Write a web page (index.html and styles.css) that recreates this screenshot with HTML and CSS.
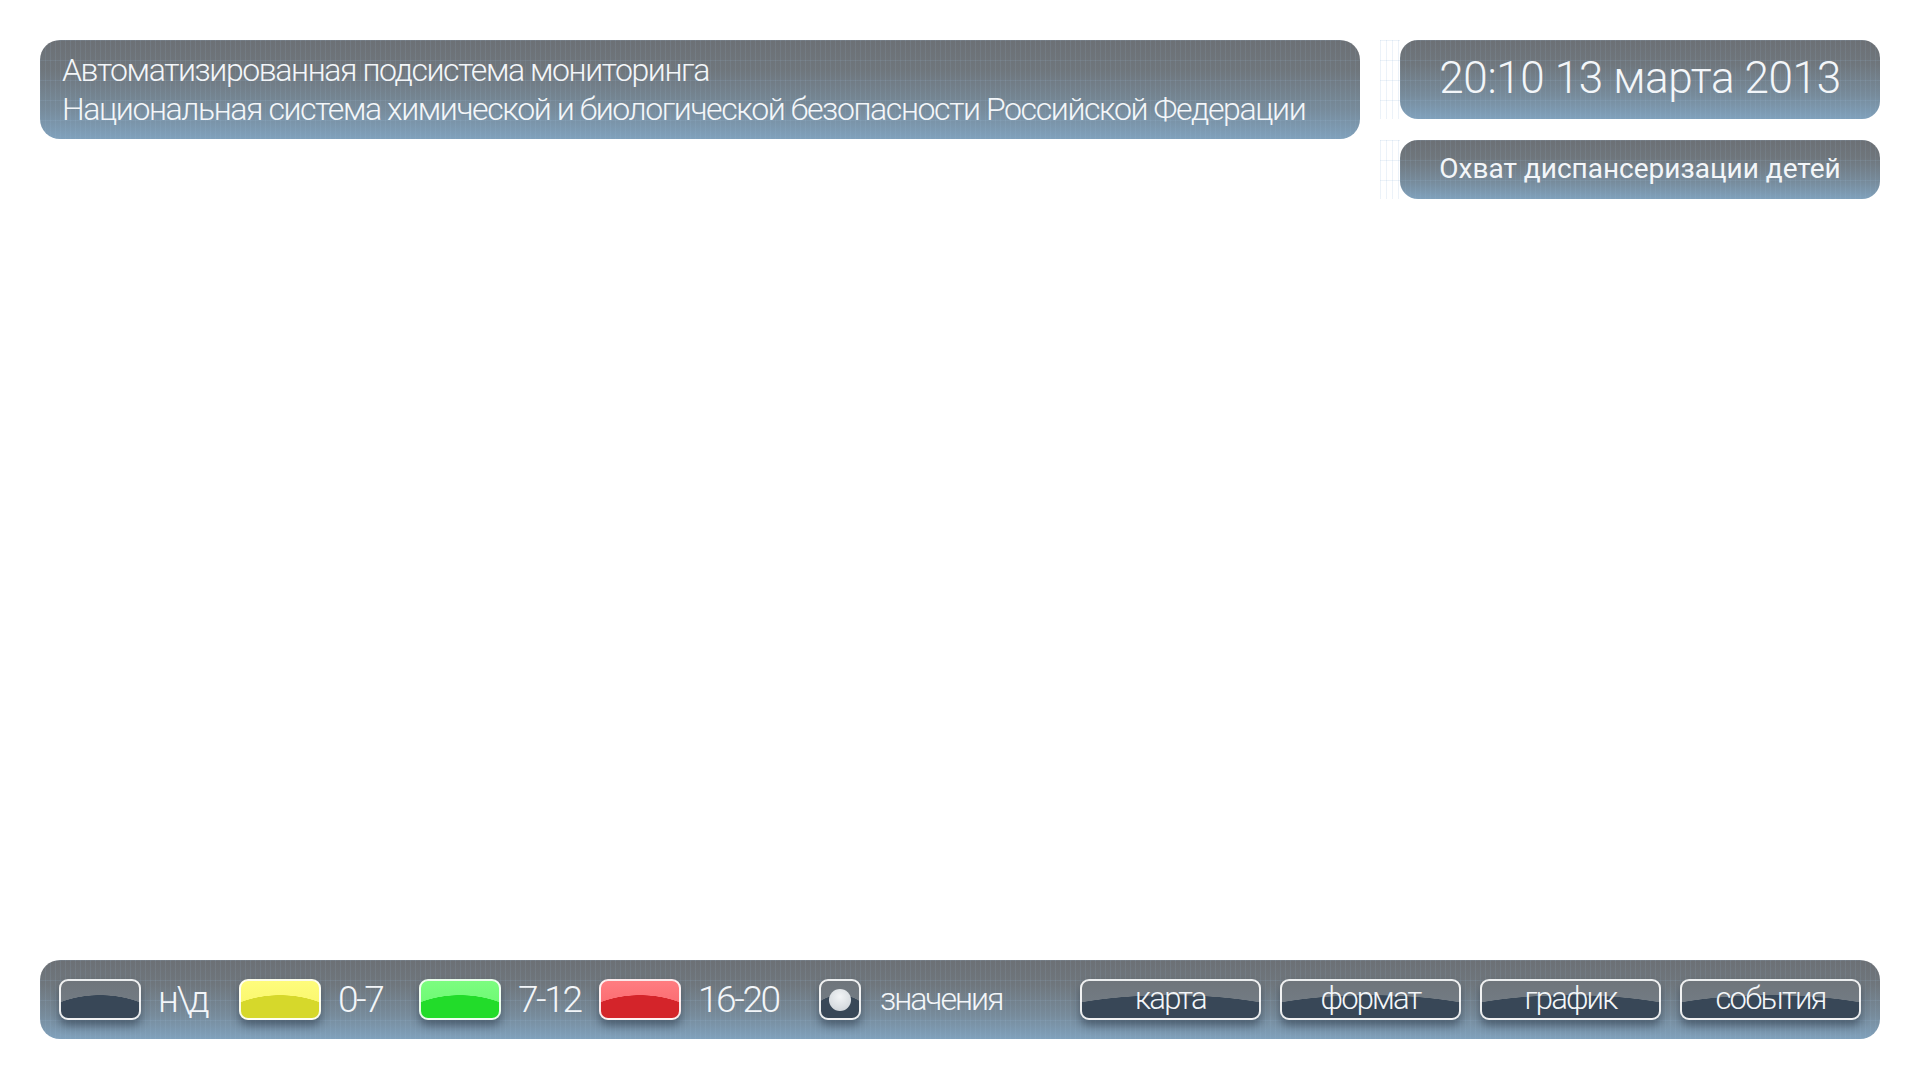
FILE: index.html
```html
<!DOCTYPE html>
<html lang="ru">
<head>
<meta charset="utf-8">
<title>Мониторинг</title>
<link rel="stylesheet" href="styles.css">
</head>
<body>
<div class="page">
  <div class="top">
    <div class="panel header">
      <div class="header-line">Автоматизированная подсистема мониторинга</div>
      <div class="header-line">Национальная система химической и биологической безопасности Российской Федерации</div>
    </div>
    <div class="side">
      <div class="panel date">20:10 13 марта 2013</div>
      <div class="panel label">Охват диспансеризации детей</div>
    </div>
  </div>
  <div class="main"></div>
  <div class="panel bar">
    <div class="legend-item"><span class="swatch sw-none"></span><span class="legend-text">н\д</span></div>
    <div class="legend-item"><span class="swatch sw-yellow"></span><span class="legend-text">0-7</span></div>
    <div class="legend-item"><span class="swatch sw-green"></span><span class="legend-text">7-12</span></div>
    <div class="legend-item legend-wide"><span class="swatch sw-red"></span><span class="legend-text">16-20</span></div>
    <div class="legend-item"><span class="toggle"><span class="dot"></span></span><span class="legend-text values">значения</span></div>
    <div class="buttons">
      <span class="btn">карта</span>
      <span class="btn">формат</span>
      <span class="btn">график</span>
      <span class="btn">события</span>
    </div>
  </div>
</div>
</body>
</html>
```
FILE: styles.css
```css
html, body {
  margin: 0;
  padding: 0;
  background: #ffffff;
}
body {
  font-family: Roboto, "Open Sans", "DejaVu Sans", sans-serif;
  color: #f3f6f9;
}
.page {
  box-sizing: border-box;
  height: 1080px;
  padding: 40px 40px 41px 40px;
  display: flex;
  flex-direction: column;
}
.top {
  display: flex;
  gap: 40px;
}
.panel {
  position: relative;
  background-color: #737c84;
  background-image:
    repeating-linear-gradient(90deg, rgba(160,195,225,0.10) 0 1px, transparent 1px 5px),
    repeating-linear-gradient(180deg, rgba(160,195,225,0.12) 0 1px, transparent 1px 20px),
    linear-gradient(180deg, #6c7075 0%, #6f767c 30%, #778b9b 70%, #80a1bc 100%);
}
.header {
  width: 1320px;
  height: 99px;
  box-sizing: border-box;
  border-radius: 20px;
  padding: 11px 0 0 22px;
  font-weight: 300;
  font-size: 32px;
  line-height: 39px;
  letter-spacing: -1.4px;
  white-space: nowrap;
}
.side {
  width: 480px;
  display: flex;
  flex-direction: column;
  gap: 21px;
}
.side .panel::before {
  content: "";
  position: absolute;
  left: -20px;
  top: 0;
  bottom: 0;
  width: 20px;
  background-image:
    repeating-linear-gradient(90deg, rgba(150,185,220,0.18) 0 1px, transparent 1px 6px),
    repeating-linear-gradient(180deg, rgba(150,185,220,0.18) 0 1px, transparent 1px 20px);
}
.date {
  height: 79px;
  box-sizing: border-box;
  padding-bottom: 4px;
  border-radius: 18px;
  display: flex;
  align-items: center;
  justify-content: center;
  font-weight: 300;
  font-size: 44px;
  letter-spacing: -0.35px;
  white-space: nowrap;
}
.label {
  height: 59px;
  box-sizing: border-box;
  padding-bottom: 3px;
  border-radius: 18px;
  display: flex;
  align-items: center;
  justify-content: center;
  font-weight: 400;
  font-size: 28px;
  letter-spacing: 0;
  white-space: nowrap;
}
.main {
  flex: 1;
}
.bar {
  height: 79px;
  box-sizing: border-box;
  border-radius: 20px;
  padding: 0 19px;
  display: flex;
  align-items: center;
}
.legend-item {
  display: flex;
  align-items: center;
  width: 180px;
  flex: none;
}
.legend-wide {
  width: 220px;
}
.legend-text {
  margin-left: 17px;
  font-weight: 300;
  font-size: 37px;
  line-height: 41px;
  letter-spacing: -2.4px;
  white-space: nowrap;
}
.legend-text.values {
  margin-left: 19px;
  font-size: 32px;
  letter-spacing: -2px;
}
.swatch, .toggle, .btn {
  box-sizing: border-box;
  height: 41px;
  border: 2px solid rgba(255,255,255,0.9);
  border-radius: 9px;
  box-shadow: 0 6px 8px rgba(25,35,50,0.45);
  flex: none;
}
.swatch {
  width: 82px;
}
.sw-none {
  background:
    radial-gradient(ellipse 74px 46px at 50% 60px, #384757 99%, transparent 100%),
    linear-gradient(180deg, #6f757b, #75808a);
}
.sw-yellow {
  background:
    radial-gradient(ellipse 74px 46px at 50% 60px, #d6d82b 99%, transparent 100%),
    linear-gradient(180deg, #fefc7c, #f8f466);
}
.sw-green {
  background:
    radial-gradient(ellipse 74px 46px at 50% 60px, #22dc2a 99%, transparent 100%),
    linear-gradient(180deg, #7cfd80, #66f86c);
}
.sw-red {
  background:
    radial-gradient(ellipse 74px 46px at 50% 60px, #d4242a 99%, transparent 100%),
    linear-gradient(180deg, #ff7c80, #f8646a);
}
.toggle {
  width: 42px;
  display: flex;
  align-items: center;
  justify-content: center;
  background:
    radial-gradient(ellipse 40px 46px at 50% 60px, #384757 99%, transparent 100%),
    linear-gradient(180deg, #6f757b, #75808a);
}
.dot {
  width: 22px;
  height: 22px;
  border-radius: 50%;
  background: radial-gradient(circle at 50% 35%, #f2f4f6 0%, #dadee2 60%, #c5cad0 100%);
}
.buttons {
  margin-left: auto;
  display: flex;
  gap: 19px;
}
.btn {
  width: 181px;
  display: flex;
  align-items: center;
  justify-content: center;
  font-weight: 300;
  font-size: 31px;
  line-height: 37px;
  letter-spacing: -1.8px;
  padding-bottom: 3px;
  white-space: nowrap;
  background:
    radial-gradient(ellipse 167px 46px at 50% 60px, #384757 99%, transparent 100%),
    linear-gradient(180deg, #6f757b, #75808a);
}
```
